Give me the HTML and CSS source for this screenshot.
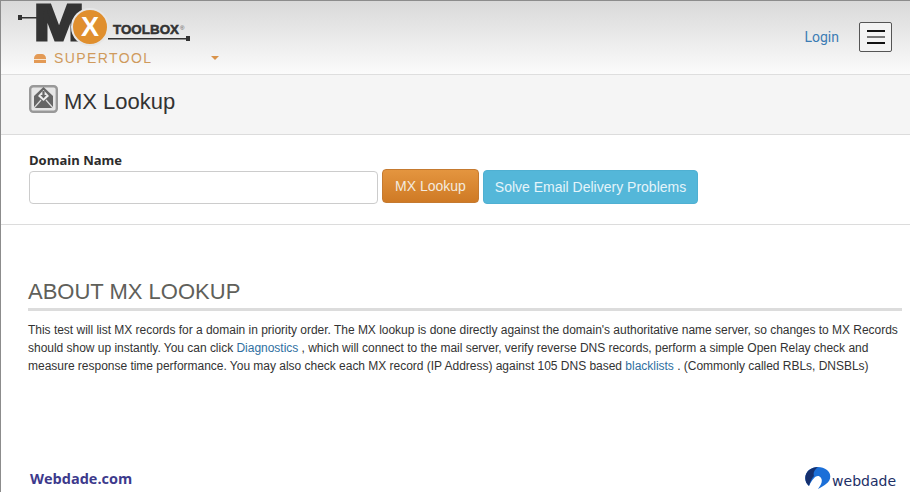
FILE: index.html
```html
<!doctype html>
<html lang="en">
	<head>
		<meta charset="utf-8">
		<meta name="viewport" content="width=device-width, initial-scale=1.0">
		<title>MX Lookup</title>
		<link rel="stylesheet" href="styles.css">
	</head>
  <body>
    <header class="topbar">
      <div class="brand">
        <svg class="logo" width="175" height="44" viewBox="0 0 175 44" aria-label="MX Toolbox">
          <rect x="0" y="12" width="4" height="5" fill="#333"/>
          <rect x="3" y="14" width="16" height="1.5" fill="#333"/>
          <text class="logo-m" x="16" y="37" textLength="50" lengthAdjust="spacingAndGlyphs">M</text>
          <circle cx="72" cy="24" r="18" fill="#e08f2e" stroke="#e6e6e6" stroke-width="2"/>
          <text class="logo-x" x="72" y="33" text-anchor="middle">X</text>
          <text class="logo-tool" x="95" y="31" textLength="66" lengthAdjust="spacingAndGlyphs">TOOLBOX</text>
          <text class="logo-reg" x="162" y="27">®</text>
          <rect x="90" y="35" width="81" height="1.5" fill="#333"/>
          <rect x="168" y="33" width="4" height="5" fill="#333"/>
        </svg>
        <div class="supertool">
          <svg class="toolbox-icon" width="14" height="11" viewBox="0 0 14 11">
            <path d="M1 5 Q2 1 5 1 L9 1 Q12 1 13 5 L13 10 L1 10Z" fill="#e39a55"/>
            <rect x="1" y="6" width="12" height="1" fill="#f7e6d2"/>
          </svg>
          <span class="supertool-label">SUPERTOOL</span>
          <span class="caret"></span>
        </div>
      </div>
      <div class="topbar-right">
        <a class="login" href="#">Login</a>
        <button class="menu-btn" type="button" aria-label="Menu">
          <span class="menu-line"></span>
          <span class="menu-line menu-line-mid"></span>
          <span class="menu-line"></span>
        </button>
      </div>
    </header>

    <section class="title-band">
      <svg class="title-icon" width="29" height="30" viewBox="0 0 29 30">
        <rect x="1.2" y="3.2" width="26.6" height="25.6" rx="3" fill="#e6e6e6" stroke="#999" stroke-width="2.4"/>
        <path d="M5 13 L14.5 4 L24 13 L24 25 L5 25Z" fill="#666"/>
        <path d="M9 13 L14.5 7 L20 13 L14.5 18Z" fill="#eee"/>
        <path d="M13.4 8 h2.2 v4 h2 l-3.1 3.4 l-3.1 -3.4 h2Z" fill="#666"/>
        <path d="M5 25 L12 17 M24 25 L17 17" stroke="#ddd" stroke-width="1.2"/>
      </svg>
      <h1 class="title">MX Lookup</h1>
    </section>

    <section class="lookup">
      <label class="field-label" for="domain">Domain Name</label>
      <div class="lookup-row">
        <input class="field" id="domain" type="text">
        <button class="btn btn-orange" type="button">MX Lookup</button>
        <button class="btn btn-blue" type="button">Solve Email Delivery Problems</button>
      </div>
    </section>

    <main class="about">
      <h2 class="about-head">ABOUT MX LOOKUP</h2>
      <p class="about-text">This test will list MX records for a domain in priority order. The MX lookup is done directly against the domain's authoritative name server, so changes to MX Records should show up instantly. You can click <a href="#">Diagnostics</a> , which will connect to the mail server, verify reverse DNS records, perform a simple Open Relay check and measure response time performance. You may also check each MX record (IP Address) against 105 DNS based <a href="#">blacklists</a> . (Commonly called RBLs, DNSBLs)</p>
    </main>

    <footer class="foot">
      <span class="foot-site">Webdade.com</span>
      <div class="foot-logo">
        <svg width="26" height="22" viewBox="0 0 26 22">
          <path d="M4 19 C-1 15 -1 7 4 3 C9 -1 17 -1 22 3 C27 7 26 14 21 17 C19 19 16 20 13 22 C16 18 18 14 16 11 C13 7 9 9 4 19Z" fill="#1b6fd8"/>
          <path d="M4 19 C-1 15 -1 7 4 3 C7 1 10 0 13 0 C9 3 8 6 9 9 C7 11 5 15 4 19Z" fill="#16306e"/>
        </svg>
        <span class="foot-logo-text">webdade</span>
      </div>
    </footer>
  </body>
</html>
```

FILE: styles.css
```css
* { box-sizing: border-box; }

html,
body {
	margin: 0;
	padding: 0;
	height: 100%;
}

body {
	display: flex;
	flex-direction: column;
	height: 492px;
	overflow: hidden;
	font-family: "Liberation Sans", Arial, sans-serif;
	color: #333;
	background-color: #fff;
	border-top: 1px solid #8c8c8c;
	border-left: 1px solid #8c8c8c;
}

a {
	color: #2f6f9f;
	text-decoration: none;
}

/* Top bar */
.topbar {
	display: flex;
	justify-content: space-between;
	height: 74px;
	padding: 2px 18px 0 17px;
	background: linear-gradient(#d9d9d9, #fbfbfb);
	border-bottom: 1px solid #dedede;
}

.logo {
	display: block;
}
.logo-m {
	font-family: "Liberation Sans", sans-serif;
	font-weight: 700;
	font-size: 50px;
	fill: #333;
	stroke: #333;
	stroke-width: 3;
}
.logo-x {
	font-family: "Liberation Sans", sans-serif;
	font-weight: 700;
	font-size: 27px;
	fill: #fff;
}
.logo-tool {
	font-family: "Liberation Sans", sans-serif;
	font-weight: 700;
	font-size: 13px;
	fill: #333;
	stroke: #333;
	stroke-width: 0.5;
}
.logo-reg {
	font-family: "Liberation Sans", sans-serif;
	font-size: 6px;
	fill: #555;
}

.supertool {
	display: flex;
	align-items: center;
	width: 186px;
	margin: 3px 0 0 15px;
}
.toolbox-icon {
	margin-right: 7px;
}
.supertool-label {
	flex: 1;
	font-size: 14px;
	letter-spacing: 1.4px;
	color: #cf9a5c;
}
.caret {
	width: 0;
	height: 0;
	border-top: 4px solid #d9934a;
	border-left: 4px solid transparent;
	border-right: 4px solid transparent;
}

.topbar-right {
	display: flex;
	align-items: flex-start;
	gap: 20px;
	padding-top: 19px;
}
.login {
	margin-top: 7px;
	font-family: Roboto, "Liberation Sans", sans-serif;
	font-size: 14px;
	color: #3b7cb4;
}
.menu-btn {
	display: flex;
	flex-direction: column;
	justify-content: center;
	align-items: center;
	gap: 4px;
	width: 33px;
	height: 30px;
	padding: 0;
	background-color: #f3f3f3;
	border: 1px solid #555;
	border-radius: 2px;
}
.menu-line {
	width: 18px;
	height: 2px;
	background-color: #111;
}
.menu-line-mid {
	background-color: #777;
}

/* Title */
.title-band {
	display: flex;
	align-items: flex-start;
	gap: 6px;
	height: 60px;
	padding: 8px 0 0 28px;
	background-color: #f5f5f5;
	border-bottom: 1px solid #dcdcdc;
}
.title {
	margin: 6px 0 0;
	font-size: 22px;
	font-weight: 400;
	line-height: 25px;
	color: #333;
}

/* Form */
.lookup {
	height: 90px;
	padding: 16px 0 0 28px;
	border-bottom: 1px solid #dcdcdc;
}
.field-label {
	display: block;
	font-family: "Open Sans", sans-serif;
	font-size: 13px;
	font-weight: 700;
	line-height: 18px;
	color: #2c2c2c;
}
.lookup-row {
	display: flex;
	align-items: flex-start;
	gap: 4px;
}
.field {
	width: 349px;
	height: 33px;
	margin-top: 2px;
	background-color: #fff;
	border: 1px solid #ccc;
	border-radius: 4px;
}
.btn {
	height: 34px;
	padding: 0 6px;
	font-family: "Liberation Sans", sans-serif;
	font-size: 14px;
	color: #f3eadf;
	border-radius: 4px;
}
.btn-orange {
	width: 97px;
	background: linear-gradient(#e4953f, #cf7a25);
	border: 1px solid #c57a30;
}
.btn-blue {
	width: 215px;
	margin-top: 1px;
	color: #e4f4fa;
	background-color: #54b7d9;
	border: 1px solid #4fb0d2;
}

/* About */
.about {
	padding: 54px 8px 0 27px;
}
.about-head {
	margin: 0;
	padding-bottom: 4px;
	font-size: 22px;
	font-weight: 400;
	line-height: 25px;
	color: #60605a;
	border-bottom: 3px solid #dcdcdc;
}
.about-text {
	margin: 10px 0 0;
	font-size: 12px;
	line-height: 18px;
	letter-spacing: -0.02px;
	color: #333;
}

/* Footer */
.foot {
	display: flex;
	justify-content: space-between;
	align-items: flex-end;
	margin-top: auto;
	padding: 0 14px 3px 29px;
}
.foot-site {
	font-family: "Open Sans", sans-serif;
	font-size: 14.5px;
	font-weight: 700;
	line-height: 20px;
	color: #3d3a8c;
}
.foot-logo {
	display: flex;
	align-items: flex-end;
	gap: 1px;
}
.foot-logo-text {
	font-family: "DejaVu Sans", sans-serif;
	font-size: 14px;
	line-height: 16px;
	color: #1c2f66;
}
```
